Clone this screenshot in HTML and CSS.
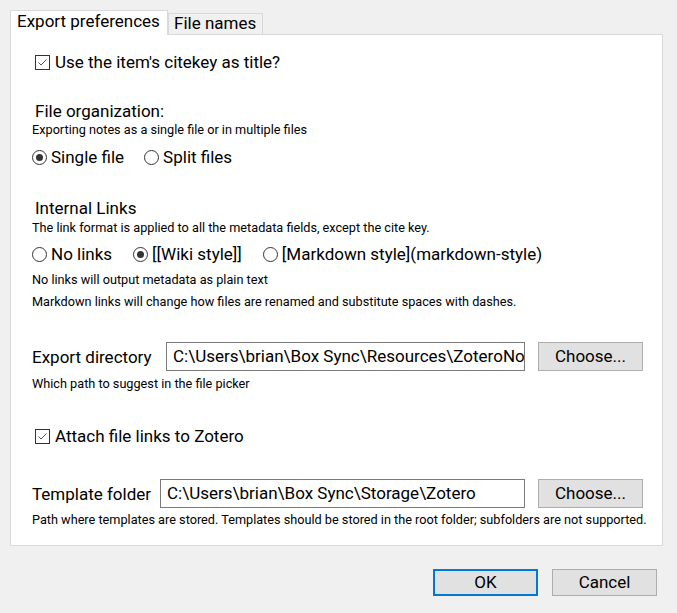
FILE: index.html
```html
<!DOCTYPE html>
<html>
<head>
<meta charset="utf-8">
<link rel="stylesheet" href="styles.css">
</head>
<body>
<div class="dialog">
  <div class="tabs">
    <div class="tab active">Export preferences</div>
    <div class="tab">File names</div>
  </div>
  <div class="panel">
    <label class="check first">
      <span class="box"><svg width="15" height="15" viewBox="0 0 15 15"><rect x="0.5" y="0.5" width="14" height="14" fill="#fff" stroke="#333"/><path d="M3.5 7.5 L6 10 L11.5 4.5" fill="none" stroke="#555" stroke-width="1"/></svg></span>
      <span>Use the item's citekey as title?</span>
    </label>

    <div class="section org">
      <div class="heading">File organization:</div>
      <div class="note">Exporting notes as a single file or in multiple files</div>
      <div class="radios">
        <label class="radio"><span class="dot on"></span>Single file</label>
        <label class="radio"><span class="dot"></span>Split files</label>
      </div>
    </div>

    <div class="section links">
      <div class="heading">Internal Links</div>
      <div class="note">The link format is applied to all the metadata fields, except the cite key.</div>
      <div class="radios">
        <label class="radio"><span class="dot"></span>No links</label>
        <label class="radio"><span class="dot on"></span>[[Wiki style]]</label>
        <label class="radio"><span class="dot"></span>[Markdown style](markdown-style)</label>
      </div>
      <div class="note n1">No links will output metadata as plain text</div>
      <div class="note n2">Markdown links will change how files are renamed and substitute spaces with dashes.</div>
    </div>

    <div class="field export">
      <span class="flabel l1">Export directory</span>
      <div class="input w1">C:\Users\brian\Box Sync\Resources\ZoteroNotes</div>
      <div class="btn">Choose...</div>
    </div>
    <div class="note fnote f1">Which path to suggest in the file picker</div>

    <label class="check attach">
      <span class="box"><svg width="15" height="15" viewBox="0 0 15 15"><rect x="0.5" y="0.5" width="14" height="14" fill="#fff" stroke="#333"/><path d="M3.5 7.5 L6 10 L11.5 4.5" fill="none" stroke="#555" stroke-width="1"/></svg></span>
      <span>Attach file links to Zotero</span>
    </label>

    <div class="field template">
      <span class="flabel l2">Template folder</span>
      <div class="input w2">C:\Users\brian\Box Sync\Storage\Zotero</div>
      <div class="btn">Choose...</div>
    </div>
    <div class="note fnote">Path where templates are stored. Templates should be stored in the root folder; subfolders are not supported.</div>
  </div>
  <div class="footer">
    <div class="btn dbtn ok">OK</div>
    <div class="btn dbtn">Cancel</div>
  </div>
</div>
</body>
</html>
```
FILE: styles.css
```css
html, body {
  margin: 0;
  padding: 0;
  background: #f0f0f0;
}
body {
  font-family: Roboto, "Liberation Sans", sans-serif;
  color: #000;
  width: 677px;
  height: 613px;
  overflow: hidden;
}
.dialog {
  padding: 10px 14px 0 10px;
}
.tabs {
  display: flex;
  align-items: flex-end;
  height: 24px;
}
.tab {
  box-sizing: border-box;
  font-size: 17px;
  line-height: 19px;
  border: 1px solid #d9d9d9;
  border-bottom: none;
  background: #f0f0f0;
  height: 21px;
  padding: 0 0 0 5px;
  margin-bottom: -1px;
  white-space: nowrap;
}
.tab.active {
  background: #fff;
  height: 25px;
  padding: 1px 0 0 6px;
  position: relative;
  z-index: 1;
  width: 158px;
}
.tab:not(.active) {
  width: 95px;
  margin-bottom: 0;
}
.panel {
  box-sizing: border-box;
  background: #fff;
  border: 1px solid #d9d9d9;
  width: 653px;
  height: 512px;
  padding: 17px 0 0 21px;
}
.check {
  display: flex;
  align-items: center;
  font-size: 17px;
  line-height: 20px;
  gap: 5px;
  margin-left: 3px;
}
.box {
  display: inline-flex;
  width: 15px;
  height: 15px;
}
.section {
  margin-top: 29px;
}
.heading {
  font-size: 17px;
  line-height: 21px;
  margin-left: 3px;
}
.note {
  font-size: 12.7px;
  line-height: 15px;
}
.radios {
  display: flex;
  gap: 20px;
  margin-top: 10px;
  font-size: 17px;
  line-height: 20px;
}
.links .radios { gap: 21px; margin-top: 9px; }
.links .heading + .note { margin-top: 1px; }
.radio {
  display: flex;
  align-items: center;
  gap: 4px;
}
.dot {
  box-sizing: border-box;
  width: 15px;
  height: 15px;
  border-radius: 50%;
  border: 1px solid #333;
  background: #fff;
  position: relative;
}
.dot.on::after {
  content: "";
  position: absolute;
  left: 3px;
  top: 3px;
  width: 7px;
  height: 7px;
  border-radius: 50%;
  background: #333;
}
.links { margin-top: 31px; }
.n1 { margin-top: 8px; }
.n2 { margin-top: 7px; }
.field {
  display: flex;
  align-items: center;
  font-size: 17px;
}
.export { margin-top: 33px; }
.flabel { white-space: nowrap; }
.l1 { width: 134px; }
.l2 { width: 128px; }
.input {
  box-sizing: border-box;
  height: 29px;
  border: 1px solid #7a7a7a;
  background: #fff;
  padding: 0 6px;
  line-height: 27px;
  white-space: nowrap;
  overflow: hidden;
  font-size: 17px;
}
.w1 { width: 359px; }
.w2 { width: 365px; }
.btn {
  box-sizing: border-box;
  height: 29px;
  width: 105px;
  border: 1px solid #adadad;
  background: #e1e1e1;
  text-align: center;
  line-height: 26px;
  font-size: 17px;
  margin-left: 13px;
}
.fnote { margin-top: 4px; }
.f1 { margin-top: 5px; }
.attach { margin-top: 35px; }
.template { margin-top: 33px; }
.footer {
  display: flex;
  justify-content: flex-end;
  gap: 14px;
  margin-top: 23px;
  margin-right: 6px;
}
.dbtn {
  width: 105px;
  height: 27px;
  margin-left: 0;
  line-height: 24px;
}
.ok {
  border: 2px solid #0078d7;
  line-height: 23px;
}
```
